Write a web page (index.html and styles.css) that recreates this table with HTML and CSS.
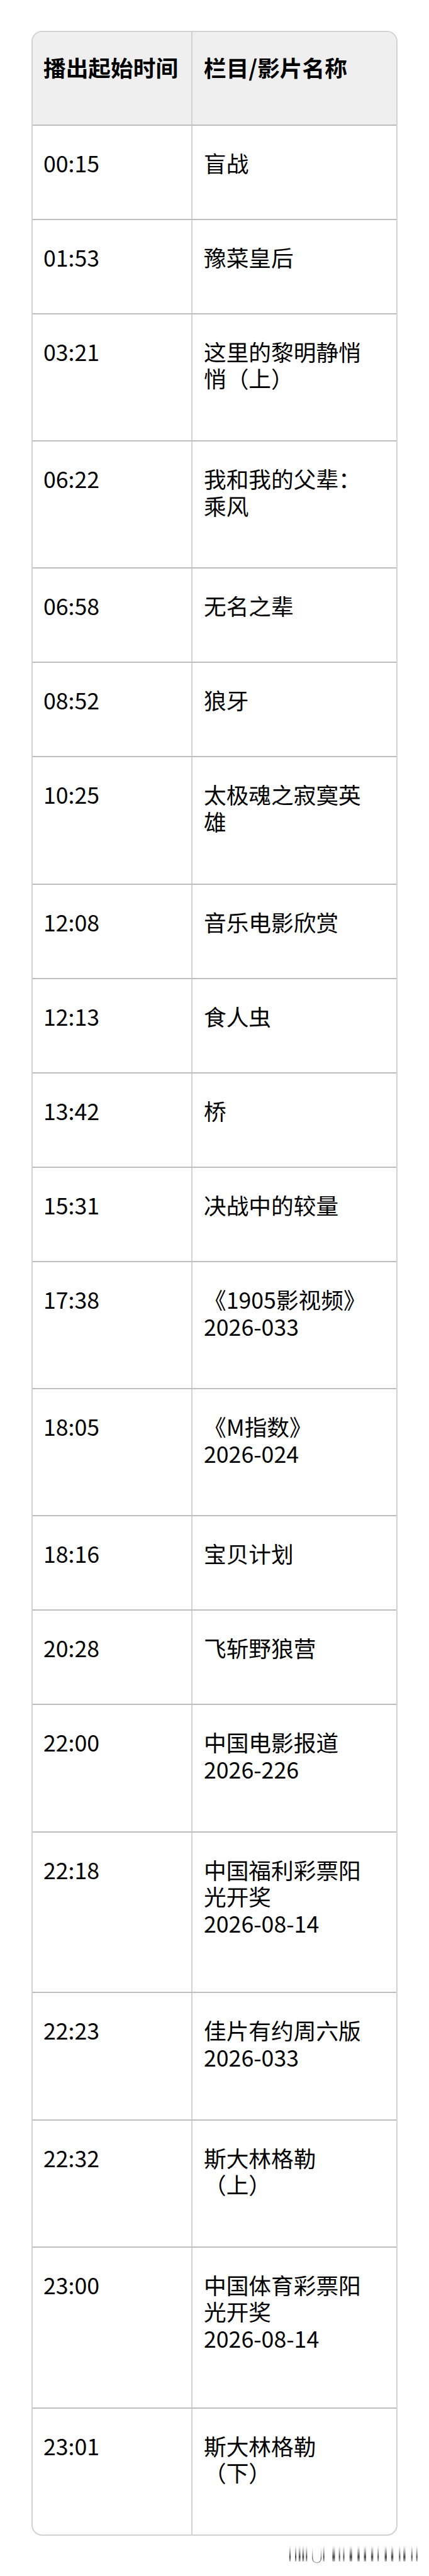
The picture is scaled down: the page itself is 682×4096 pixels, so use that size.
FILE: index.html
```html
<!DOCTYPE html>
<html lang="zh-CN">
<head>
<meta charset="utf-8">
<title>节目单</title>
<link rel="stylesheet" href="styles.css">
</head>
<body>
<div class="page">
  <div class="table">
    <div class="row head"><div class="cell time">播出起始时间</div><div class="cell name">栏目/影片名称</div></div>
    <div class="row"><div class="cell time">00:15</div><div class="cell name">盲战</div></div>
    <div class="row"><div class="cell time">01:53</div><div class="cell name">豫菜皇后</div></div>
    <div class="row l2"><div class="cell time">03:21</div><div class="cell name">这里的黎明静悄悄（上）</div></div>
    <div class="row l2"><div class="cell time">06:22</div><div class="cell name">我和我的父辈：乘风</div></div>
    <div class="row"><div class="cell time">06:58</div><div class="cell name">无名之辈</div></div>
    <div class="row"><div class="cell time">08:52</div><div class="cell name">狼牙</div></div>
    <div class="row l2"><div class="cell time">10:25</div><div class="cell name">太极魂之寂寞英雄</div></div>
    <div class="row"><div class="cell time">12:08</div><div class="cell name">音乐电影欣赏</div></div>
    <div class="row"><div class="cell time">12:13</div><div class="cell name">食人虫</div></div>
    <div class="row"><div class="cell time">13:42</div><div class="cell name">桥</div></div>
    <div class="row"><div class="cell time">15:31</div><div class="cell name">决战中的较量</div></div>
    <div class="row l2"><div class="cell time">17:38</div><div class="cell name">《1905影视频》<span class="code">2026-033</span></div></div>
    <div class="row l2"><div class="cell time">18:05</div><div class="cell name">《M指数》<span class="code">2026-024</span></div></div>
    <div class="row"><div class="cell time">18:16</div><div class="cell name">宝贝计划</div></div>
    <div class="row"><div class="cell time">20:28</div><div class="cell name">飞斩野狼营</div></div>
    <div class="row l2"><div class="cell time">22:00</div><div class="cell name">中国电影报道 <span class="code">2026-226</span></div></div>
    <div class="row l3"><div class="cell time">22:18</div><div class="cell name">中国福利彩票阳光开奖 <span class="code">2026-08-14</span></div></div>
    <div class="row l2"><div class="cell time">22:23</div><div class="cell name">佳片有约周六版 <span class="code">2026-033</span></div></div>
    <div class="row l2"><div class="cell time">22:32</div><div class="cell name">斯大林格勒（上）</div></div>
    <div class="row l3"><div class="cell time">23:00</div><div class="cell name">中国体育彩票阳光开奖 <span class="code">2026-08-14</span></div></div>
    <div class="row l2"><div class="cell time">23:01</div><div class="cell name">斯大林格勒（下）</div></div>
  </div>
</div>
<div class="watermark">
  <svg class="wm-svg" viewBox="0 0 352 60" width="242" height="41" aria-hidden="true">
    <defs>
      <linearGradient id="wmg" x1="0" y1="0" x2="0" y2="1">
        <stop offset="0" stop-color="#ffffff" stop-opacity="0"/>
        <stop offset="0.35" stop-color="#9a9a9a" stop-opacity="0.6"/>
        <stop offset="0.75" stop-color="#3a3a3a" stop-opacity="0.95"/>
        <stop offset="1" stop-color="#777777" stop-opacity="0.6"/>
      </linearGradient>
    </defs>
    <g fill="url(#wmg)">
      <rect x="28" y="7" width="3.3" height="41"/>
      <rect x="41.5" y="7" width="3" height="41"/>
      <rect x="50" y="7" width="4" height="41"/>
      <rect x="58.3" y="7" width="4" height="41"/>
      <rect x="66.7" y="7" width="3" height="41"/>
      <rect x="106.7" y="7" width="3" height="41"/>
      <rect x="128.3" y="7" width="6" height="41"/>
      <rect x="143.3" y="7" width="3" height="41"/>
      <rect x="153.3" y="7" width="3" height="41"/>
      <rect x="168.3" y="7" width="6" height="41"/>
      <rect x="186.7" y="7" width="5" height="41"/>
      <rect x="201.7" y="7" width="5" height="41"/>
      <rect x="218.3" y="7" width="5" height="41"/>
      <rect x="233.3" y="7" width="3" height="41"/>
      <rect x="250" y="7" width="5" height="41"/>
      <rect x="265" y="7" width="5" height="41"/>
      <rect x="283.3" y="7" width="3" height="41"/>
      <rect x="293.3" y="7" width="5" height="41"/>
      <rect x="311.7" y="7" width="3" height="41"/>
      <rect x="323.3" y="7" width="3" height="41"/>
    </g>
    <path d="M82 12 V40 Q82 51 92 51 Q102 51 102 40 V12" fill="none" stroke="url(#wmg)" stroke-width="1.6"/>
  </svg>
</div>
</body>
</html>
```

FILE: styles.css
```css
html, body {
  margin: 0;
  padding: 0;
  background: #ffffff;
}

body {
  font-family: "Noto Sans CJK SC", "Noto Sans", sans-serif;
  color: #000000;
}

.page {
  padding: 49px 50px 0 50px;
}

.table {
  border: 2px solid #d2d2d2;
  border-radius: 17px;
  overflow: hidden;
  background: #ffffff;
}

.row {
  display: grid;
  grid-template-columns: 254px 1fr;
}

.row + .row {
  border-top: 2px solid #bdbdbd;
}

.cell {
  font-size: 35.7px;
  line-height: 42.6px;
  padding: 38px 8px 67.5px 17px;
}

.cell.time {
  border-right: 2px solid #d3d3d3;
  white-space: nowrap;
}

.cell.name {
  padding-left: 18px;
  padding-right: 40px;
}

.code {
  white-space: nowrap;
}

.row.l2 .cell {
  padding-bottom: 77px;
}

.row.l3 .cell {
  padding-bottom: 88px;
}

.row.head {
  background: #efefef;
}

.row.head .cell {
  font-weight: 700;
  padding-top: 35px;
  padding-bottom: 69px;
}

.watermark {
  display: flex;
  justify-content: flex-end;
  padding-top: 8px;
}

.wm-svg {
  display: block;
}
```
